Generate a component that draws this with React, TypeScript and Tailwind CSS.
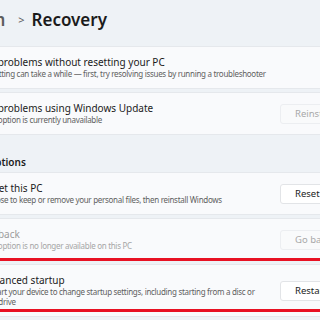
import React from 'react';

type Row = {
  title: string;
  desc: string;
  button?: string;
  disabled?: boolean;
  faded?: boolean;
};

const font = { fontFamily: '"Noto Sans", "Open Sans", sans-serif' };

function Card({ title, desc, button, disabled, faded }: Row) {
  return (
    <div className="flex items-center bg-[#f9fafc] border border-[#e5e8ec] rounded-[4px] pl-[39px] py-[9px]">
      <div className="w-[286px]">
        <div className={`text-[10px] leading-[13px] ${faded ? 'text-[#9c9c9c]' : 'text-[#1b1b1b]'}`}>
          {title}
        </div>
        <div className={`text-[8px] leading-[10px] tracking-[-0.3px] ${faded ? 'text-[#a6a6a6]' : 'text-[#5f5f5f]'}`}>
          {desc}
        </div>
      </div>
      <div className="ml-[12px] w-[80px] shrink-0 flex">
        {button && (
          <button
            className={`h-[20px] w-[80px] rounded-[3px] border text-left pl-[14px] text-[9.5px] leading-[18px] ${
              disabled
                ? 'border-[#eceef1] bg-[#f9fafb] text-[#a8a8a8]'
                : 'border-[#e2e4e7] bg-white text-[#1b1b1b]'
            }`}
          >
            {button}
          </button>
        )}
      </div>
    </div>
  );
}

export default function App() {
  return (
    <div className="w-[320px] h-[320px] overflow-hidden bg-[#eef2f6]" style={font}>
      <div className="ml-[-58px] w-[440px]">
        {/* Fil d'Ariane */}
        <div className="h-[46px] flex items-center pb-[6px] ml-[3px]">
          <span className="text-[17px] font-semibold text-[#5c5c5c]">System</span>
          <span className="ml-[13px] mr-[7px] text-[11px] text-[#5c5c5c]">&gt;</span>
          <span className="text-[17px] font-semibold text-[#1b1b1b]">Recovery</span>
        </div>

        <div className="flex flex-col gap-[3px]">
          <Card
            title="Fix problems without resetting your PC"
            desc="Resetting can take a while — first, try resolving issues by running a troubleshooter"
          />
          <Card
            title="Fix problems using Windows Update"
            desc="This option is currently unavailable"
            button="Reinstall now"
            disabled
          />
        </div>

        <div className="pt-[20px] pb-[3px] leading-[14px] text-[10px] font-semibold text-[#1b1b1b]">
          Recovery options
        </div>

        <div className="flex flex-col gap-[3px]">
          <Card
            title="Reset this PC"
            desc="Choose to keep or remove your personal files, then reinstall Windows"
            button="Reset PC"
          />
          <Card
            title="Go back"
            desc="This option is no longer available on this PC"
            button="Go back"
            disabled
            faded
          />
          <div className="relative">
            <Card
              title="Advanced startup"
              desc="Restart your device to change startup settings, including starting from a disc or USB drive"
              button="Restart now"
            />
            {/* cadre rouge d'annotation */}
            <div className="absolute top-[-6px] left-[-3px] right-[-3px] h-[54px] border-[3px] border-[#e81123] pointer-events-none" />
          </div>
          <div className="h-[40px] bg-[#f9fafc] border border-[#e5e8ec] rounded-[4px]" />
        </div>
      </div>
    </div>
  );
}
